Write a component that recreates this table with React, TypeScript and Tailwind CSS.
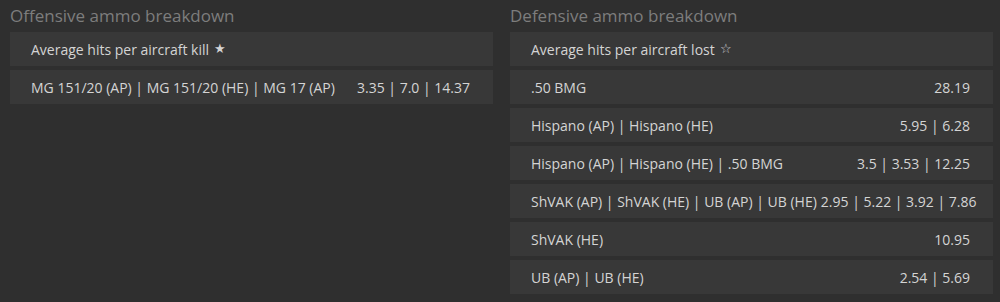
const offensive = {
  header: 'Average hits per aircraft kill',
  star: '★',
  rows: [{ ammo: 'MG 151/20 (AP) | MG 151/20 (HE) | MG 17 (AP)', hits: '3.35 | 7.0 | 14.37' }],
};

const defensive = {
  header: 'Average hits per aircraft lost',
  star: '☆',
  rows: [
    { ammo: '.50 BMG', hits: '28.19' },
    { ammo: 'Hispano (AP) | Hispano (HE)', hits: '5.95 | 6.28' },
    { ammo: 'Hispano (AP) | Hispano (HE) | .50 BMG', hits: '3.5 | 3.53 | 12.25' },
    { ammo: 'ShVAK (AP) | ShVAK (HE) | UB (AP) | UB (HE)', hits: '2.95 | 5.22 | 3.92 | 7.86' },
    { ammo: 'ShVAK (HE)', hits: '10.95' },
    { ammo: 'UB (AP) | UB (HE)', hits: '2.54 | 5.69' },
  ],
};

function Breakdown({ title, data }: { title: string; data: typeof defensive }) {
  return (
    <div className="pl-[10px] pr-[7px]">
      <h2 className="text-[17px] leading-[22px] pt-[5px] pb-[5px] text-[#7d7d7d]">{title}</h2>
      <div className="flex flex-col gap-[4px]">
        <div className="h-[34px] flex items-center pl-[21px] bg-[#383838]">
          {data.header} <span className="ml-[5px] text-[13px]">{data.star}</span>
        </div>
        {data.rows.map((r, i) => (
          <div key={i} className="h-[34px] flex items-center justify-between gap-[4px] pl-[21px] pr-[23px] bg-[#383838]">
            <span className="whitespace-nowrap">{r.ammo}</span>
            <span className="whitespace-nowrap">{r.hits}</span>
          </div>
        ))}
      </div>
    </div>
  );
}

export default function App() {
  return (
    <div
      className="w-[1000px] h-[302px] bg-[#2f2f2f] text-[14px] text-[#d4d4d4] grid grid-cols-2"
      style={{ fontFamily: '"Open Sans", sans-serif' }}
    >
      <Breakdown title="Offensive ammo breakdown" data={offensive} />
      <Breakdown title="Defensive ammo breakdown" data={defensive} />
    </div>
  );
}
